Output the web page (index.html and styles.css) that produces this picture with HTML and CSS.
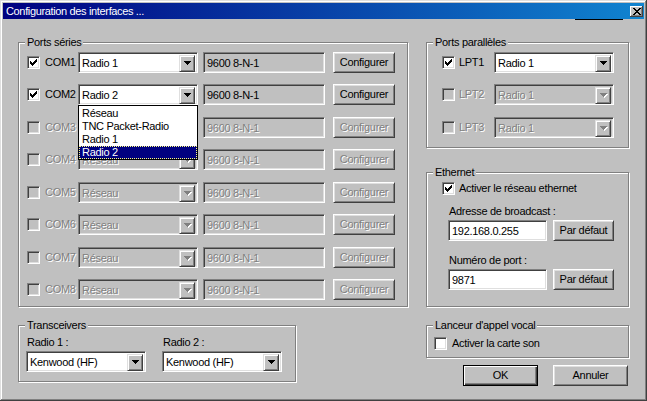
FILE: index.html
```html
<!DOCTYPE html>
<html>
<head>
<meta charset="utf-8">
<title>Configuration des interfaces</title>
<link rel="stylesheet" href="styles.css">
</head>
<body>
<svg class="defs" width="0" height="0">
  <symbol id="check" viewBox="0 0 7 7"><path d="M0 2h1v3H0zM1 3h1v3H1zM2 4h1v3H2zM3 3h1v3H3zM4 2h1v3H4zM5 1h1v3H5zM6 0h1v3H6z"/></symbol>
  <symbol id="arrow" viewBox="0 0 8 5"><path d="M0 0h7v1H0zM1 1h5v1H1zM2 2h3v1H2zM3 3h1v1H3z"/></symbol>
  <symbol id="arrow-off" viewBox="0 0 8 5"><path fill="#fff" d="M1 1h7v1H1zM2 2h5v1H2zM3 3h3v1H3zM4 4h1v1H4z"/><path fill="#808080" d="M0 0h7v1H0zM1 1h5v1H1zM2 2h3v1H2zM3 3h1v1H3z"/></symbol>
  <symbol id="cross" viewBox="0 0 8 7"><path d="M0 0h2v1H0zM6 0h2v1H6zM1 1h2v1H1zM5 1h2v1H5zM2 2h4v1H2zM3 3h2v1H3zM2 4h4v1H2zM1 5h2v1H1zM5 5h2v1H5zM0 6h2v1H0zM6 6h2v1H6z"/></symbol>
</svg>
<div class="window">
  <div class="titlebar">
    <span class="title">Configuration des interfaces ...</span>
    <span class="close"><svg width="8" height="7"><use href="#cross"/></svg></span>
  </div>
  <div class="stray"></div>
  <div class="content">
    <div class="col-left">
      <div class="group serial">
        <span class="group-title">Ports séries</span>
        <div class="row">
          <span class="chk com"><span class="box"><svg width="7" height="7"><use href="#check"/></svg></span><span class="lbl">COM1</span></span>
          <span class="combo"><span class="val">Radio 1</span><span class="drop"><svg width="8" height="5"><use href="#arrow"/></svg></span></span>
          <span class="edit">9600 8-N-1</span>
          <span class="btn cfg">Configurer</span>
        </div>
        <div class="row">
          <span class="chk com"><span class="box"><svg width="7" height="7"><use href="#check"/></svg></span><span class="lbl">COM2</span></span>
          <span class="combo open"><span class="val">Radio 2</span><span class="drop"><svg width="8" height="5"><use href="#arrow"/></svg></span>
            <span class="list">
              <span class="item">Réseau</span>
              <span class="item">TNC Packet-Radio</span>
              <span class="item">Radio 1</span>
              <span class="item sel">Radio 2</span>
            </span>
          </span>
          <span class="edit">9600 8-N-1</span>
          <span class="btn cfg">Configurer</span>
        </div>
        <div class="row off">
          <span class="chk com"><span class="box"></span><span class="lbl">COM3</span></span>
          <span class="combo"><span class="val">Réseau</span><span class="drop"><svg width="8" height="5"><use href="#arrow-off"/></svg></span></span>
          <span class="edit">9600 8-N-1</span>
          <span class="btn cfg">Configurer</span>
        </div>
        <div class="row off">
          <span class="chk com"><span class="box"></span><span class="lbl">COM4</span></span>
          <span class="combo"><span class="val">Réseau</span><span class="drop"><svg width="8" height="5"><use href="#arrow-off"/></svg></span></span>
          <span class="edit">9600 8-N-1</span>
          <span class="btn cfg">Configurer</span>
        </div>
        <div class="row off">
          <span class="chk com"><span class="box"></span><span class="lbl">COM5</span></span>
          <span class="combo"><span class="val">Réseau</span><span class="drop"><svg width="8" height="5"><use href="#arrow-off"/></svg></span></span>
          <span class="edit">9600 8-N-1</span>
          <span class="btn cfg">Configurer</span>
        </div>
        <div class="row off">
          <span class="chk com"><span class="box"></span><span class="lbl">COM6</span></span>
          <span class="combo"><span class="val">Réseau</span><span class="drop"><svg width="8" height="5"><use href="#arrow-off"/></svg></span></span>
          <span class="edit">9600 8-N-1</span>
          <span class="btn cfg">Configurer</span>
        </div>
        <div class="row off">
          <span class="chk com"><span class="box"></span><span class="lbl">COM7</span></span>
          <span class="combo"><span class="val">Réseau</span><span class="drop"><svg width="8" height="5"><use href="#arrow-off"/></svg></span></span>
          <span class="edit">9600 8-N-1</span>
          <span class="btn cfg">Configurer</span>
        </div>
        <div class="row off">
          <span class="chk com"><span class="box"></span><span class="lbl">COM8</span></span>
          <span class="combo"><span class="val">Réseau</span><span class="drop"><svg width="8" height="5"><use href="#arrow-off"/></svg></span></span>
          <span class="edit">9600 8-N-1</span>
          <span class="btn cfg">Configurer</span>
        </div>
      </div>
      <div class="group trx">
        <span class="group-title">Transceivers</span>
        <div class="trx-col">
          <span class="field-label">Radio 1 :</span>
          <span class="combo"><span class="val">Kenwood (HF)</span><span class="drop"><svg width="8" height="5"><use href="#arrow"/></svg></span></span>
        </div>
        <div class="trx-col">
          <span class="field-label">Radio 2 :</span>
          <span class="combo"><span class="val">Kenwood (HF)</span><span class="drop"><svg width="8" height="5"><use href="#arrow"/></svg></span></span>
        </div>
      </div>
    </div>
    <div class="col-right">
      <div class="group parallel">
        <span class="group-title">Ports parallèles</span>
        <div class="row">
          <span class="chk lpt"><span class="box"><svg width="7" height="7"><use href="#check"/></svg></span><span class="lbl">LPT1</span></span>
          <span class="combo"><span class="val">Radio 1</span><span class="drop"><svg width="8" height="5"><use href="#arrow"/></svg></span></span>
        </div>
        <div class="row off">
          <span class="chk lpt"><span class="box"></span><span class="lbl">LPT2</span></span>
          <span class="combo"><span class="val">Radio 1</span><span class="drop"><svg width="8" height="5"><use href="#arrow-off"/></svg></span></span>
        </div>
        <div class="row off">
          <span class="chk lpt"><span class="box"></span><span class="lbl">LPT3</span></span>
          <span class="combo"><span class="val">Radio 1</span><span class="drop"><svg width="8" height="5"><use href="#arrow-off"/></svg></span></span>
        </div>
      </div>
      <div class="group ethernet">
        <span class="group-title">Ethernet</span>
        <span class="chk"><span class="box"><svg width="7" height="7"><use href="#check"/></svg></span><span class="lbl">Activer le réseau ethernet</span></span>
        <div class="eth-field">
          <span class="field-label">Adresse de broadcast :</span>
          <div class="eth-line">
            <span class="edit white">192.168.0.255</span>
            <span class="btn def">Par défaut</span>
          </div>
        </div>
        <div class="eth-field second">
          <span class="field-label">Numéro de port :</span>
          <div class="eth-line">
            <span class="edit white">9871</span>
            <span class="btn def">Par défaut</span>
          </div>
        </div>
      </div>
      <div class="group vocal">
        <span class="group-title">Lanceur d'appel vocal</span>
        <span class="chk"><span class="box"></span><span class="lbl">Activer la carte son</span></span>
      </div>
      <div class="actions">
        <span class="btn main default">OK</span>
        <span class="btn main">Annuler</span>
      </div>
    </div>
  </div>
</div>
</body>
</html>
```

FILE: styles.css
```css
* { box-sizing: border-box; }
html, body { margin: 0; padding: 0; }
body {
  width: 647px;
  height: 401px;
  overflow: hidden;
  background: #c0c0c0;
  font-family: "Liberation Sans", Arial, sans-serif;
  font-size: 11px;
  line-height: 13px;
  letter-spacing: -0.3px;
  color: #000;
}
.defs { position: absolute; width: 0; height: 0; overflow: hidden; }
svg { display: block; shape-rendering: crispEdges; fill: #000; }

.window {
  position: relative;
  width: 647px;
  height: 401px;
  padding: 3px;
  background: #c0c0c0;
  box-shadow: inset -1px -1px #404040, inset 1px 1px #dfdfdf, inset -2px -2px #808080, inset 2px 2px #fff;
}
.titlebar {
  display: flex;
  align-items: center;
  justify-content: space-between;
  height: 16px;
  padding: 0 1px 0 3px;
  background: linear-gradient(to right, #000080, #1084d0);
  color: #fff;
}
.title { line-height: 16px; white-space: nowrap; letter-spacing: -0.35px; }
.close {
  display: flex;
  align-items: center;
  justify-content: center;
  width: 13px;
  height: 11px;
  background: #c0c0c0;
  box-shadow: inset -1px -1px #404040, inset 1px 1px #fff, inset -2px -2px #808080;
}
.stray {
  position: absolute;
  left: 575px;
  top: 19px;
  width: 48px;
  height: 1px;
  background: #000;
}

.content {
  display: flex;
  justify-content: space-between;
  padding: 23px 15px 0 15px;
}
.col-left { width: 390px; display: flex; flex-direction: column; align-items: flex-start; }
.col-right { width: 203px; display: flex; flex-direction: column; }

.group {
  position: relative;
  border: 1px solid #808080;
  box-shadow: inset 1px 1px #fff, 1px 1px #fff;
}
.group-title {
  position: absolute;
  top: -7px;
  left: 6px;
  padding: 0 2px;
  line-height: 13px;
  background: #c0c0c0;
  white-space: nowrap;
}

/* serial ports */
.serial { width: 390px; padding: 9px 0 6px 8px; }
.row { display: flex; align-items: center; height: 21px; }
.row + .row { margin-top: 11px; }
.row:nth-child(odd) + .row { margin-top: 12px; }

.chk { display: flex; align-items: center; gap: 5px; white-space: nowrap; }
.chk.com { width: 51px; }
.chk.lpt { width: 52px; gap: 4px; }
.box {
  display: flex;
  align-items: center;
  justify-content: center;
  width: 13px;
  height: 13px;
  flex: none;
  background: #fff;
  border: 1px solid;
  border-color: #808080 #fff #fff #808080;
  box-shadow: inset 1px 1px #404040, inset -1px -1px #dfdfdf;
}
.lbl { line-height: 13px; }

.combo {
  position: relative;
  display: flex;
  align-items: stretch;
  width: 120px;
  height: 21px;
  flex: none;
  padding: 2px;
  background: #fff;
  border: 1px solid;
  border-color: #808080 #fff #fff #808080;
  box-shadow: inset 1px 1px #404040, inset -1px -1px #dfdfdf;
}
.combo .val { flex: 1; padding-left: 1px; line-height: 16px; white-space: nowrap; overflow: hidden; }
.drop {
  display: flex;
  align-items: center;
  justify-content: center;
  width: 16px;
  height: 17px;
  padding-left: 1px;
  background: #c0c0c0;
  border: 1px solid;
  border-color: #dfdfdf #404040 #404040 #dfdfdf;
  box-shadow: inset 1px 1px #fff, inset -1px -1px #808080;
}

.edit {
  display: block;
  width: 122px;
  height: 21px;
  flex: none;
  margin-left: 5px;
  padding: 2px 0 0 3px;
  line-height: 16px;
  background: #c0c0c0;
  border: 1px solid;
  border-color: #808080 #fff #fff #808080;
  box-shadow: inset 1px 1px #404040, inset -1px -1px #dfdfdf;
  white-space: nowrap;
}
.edit.white { background: #fff; margin-left: 0; width: 99px; }

.btn {
  display: flex;
  align-items: center;
  justify-content: center;
  height: 21px;
  flex: none;
  background: #c0c0c0;
  border: 1px solid;
  border-color: #fff #404040 #404040 #fff;
  box-shadow: inset 1px 1px #dfdfdf, inset -1px -1px #808080;
  white-space: nowrap;
}
.btn.cfg { width: 62px; margin-left: 8px; }
.btn.def { width: 61px; margin-left: 6px; }

.off .lbl,
.off .val,
.off .edit,
.off .btn { color: #808080; text-shadow: 1px 1px 0 #fff; }
.off .box,
.off .combo { background: #c0c0c0; }

.list {
  position: absolute;
  top: 20px;
  left: -1px;
  z-index: 5;
  display: flex;
  flex-direction: column;
  width: 120px;
  padding-top: 1px;
  background: #fff;
  border: 1px solid #000;
}
.item { height: 13px; line-height: 13px; padding-left: 3px; white-space: nowrap; }
.item.sel {
  background: #000080;
  color: #fff;
  outline: 1px dotted #ffff80;
  outline-offset: -1px;
}

/* transceivers */
.trx {
  margin-top: 18px;
  width: 278px;
  display: flex;
  gap: 16px;
  padding: 10px 0 9px 7px;
}
.trx-col { display: flex; flex-direction: column; gap: 2px; }
.field-label { display: block; padding-left: 1px; line-height: 13px; white-space: nowrap; }

/* right column */
.parallel { padding: 9px 0 9px 15px; }
.ethernet { margin-top: 24px; padding: 9px 0 16px 15px; }
.ethernet .chk { gap: 4px; }
.eth-field { margin: 10px 0 0 6px; }
.eth-field.second { margin-top: 13px; }
.eth-field .field-label { margin-bottom: 2px; }
.eth-line { display: flex; }
.vocal { margin-top: 18px; padding: 11px 0 7px 7px; }
.vocal .chk { gap: 5px; }

.actions {
  display: flex;
  justify-content: flex-end;
  gap: 15px;
  margin-top: 7px;
  padding-right: 1px;
}
.btn.main { width: 75px; }
.btn.default {
  border-color: #000;
  box-shadow: inset 1px 1px #fff, inset -1px -1px #404040, inset -2px -2px #808080;
}
```
